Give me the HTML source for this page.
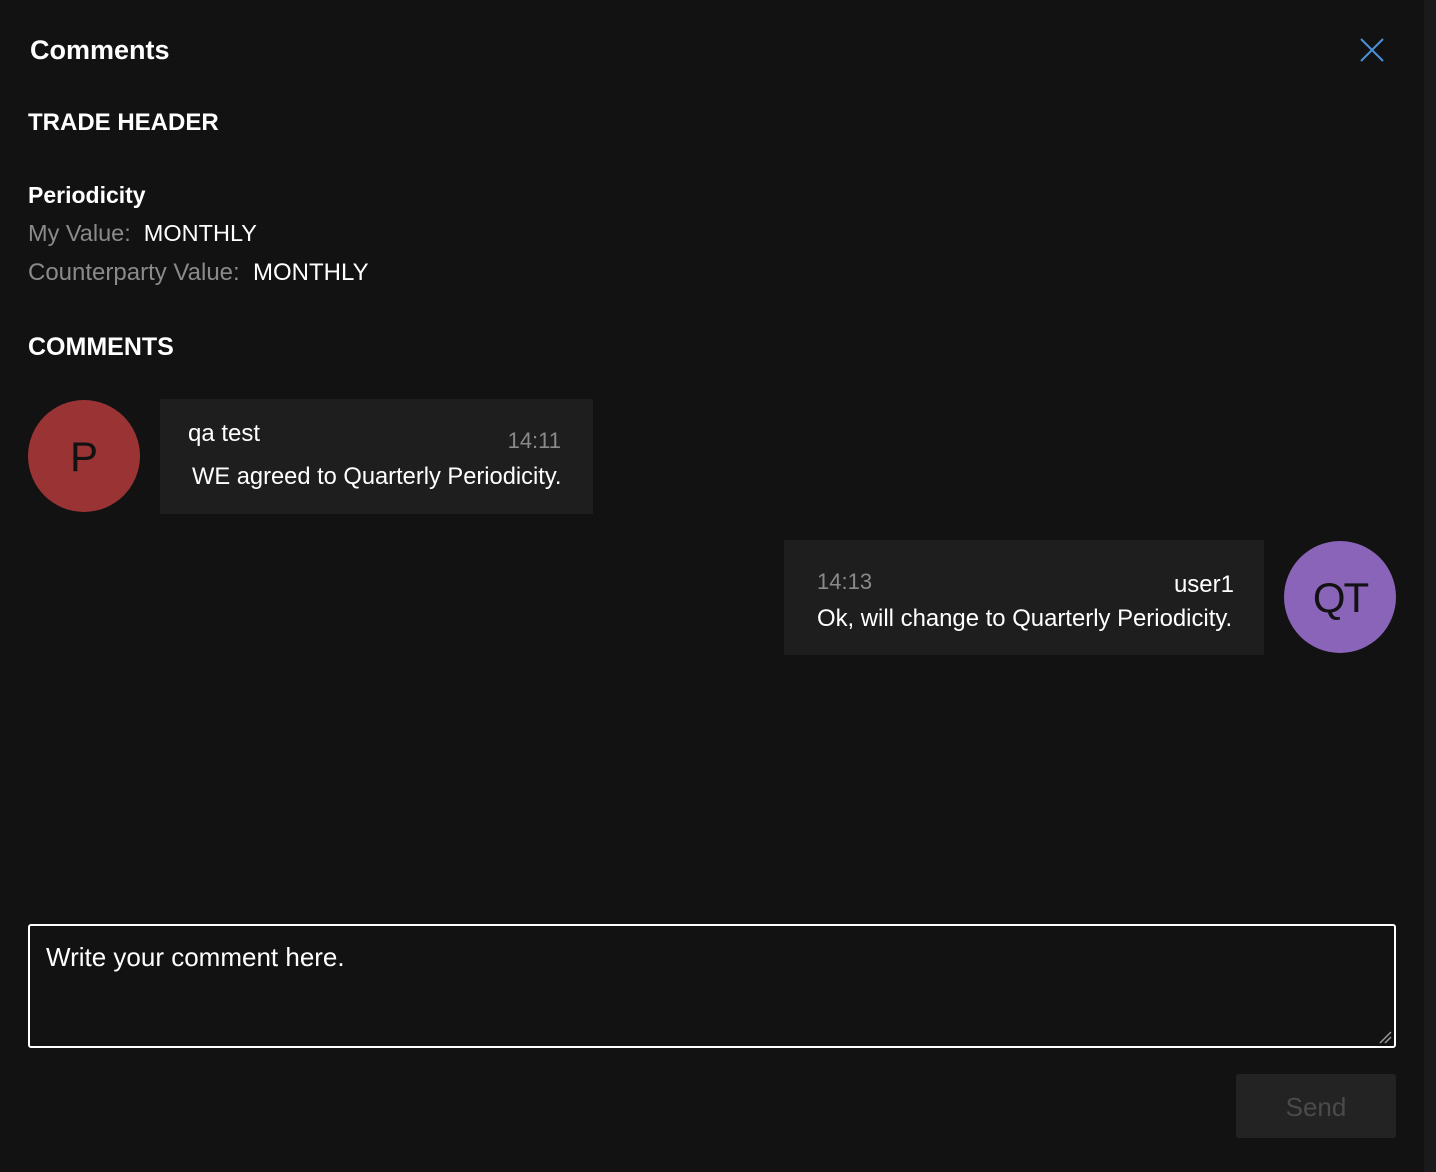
<!DOCTYPE html>
<html><head><meta charset="utf-8"><style>
*{margin:0;padding:0;box-sizing:border-box}
body{width:1436px;height:1172px;background:#121212;font-family:"Liberation Sans",sans-serif;color:#fff;position:relative;overflow:hidden}
.a{position:absolute;white-space:nowrap}
.b{font-weight:bold}
.g{color:#8a8a8a}
</style></head><body>
<div class="a" style="right:0;top:0;width:12px;height:1172px;background:#1a1a1a"></div>
<div class="a b" style="left:30px;top:35px;font-size:27px">Comments</div>
<svg class="a" style="left:1360px;top:38px" width="24" height="24"><path d="M1 1L23 23M23 1L1 23" stroke="#4a90d9" stroke-width="2"/></svg>
<div class="a b" style="left:28px;top:109px;font-size:24px">TRADE HEADER</div>
<div class="a b" style="left:28px;top:182px;font-size:23px">Periodicity</div>
<div class="a" style="left:28px;top:220px;font-size:23.5px"><span class="g">My Value:</span>&nbsp; MONTHLY</div>
<div class="a" style="left:28px;top:259px;font-size:24px"><span class="g">Counterparty Value:</span>&nbsp; MONTHLY</div>
<div class="a b" style="left:28px;top:333px;font-size:25px">COMMENTS</div>
<div class="a" style="left:28px;top:400px;width:112px;height:112px;border-radius:50%;background:#9a3434;color:#121212;font-size:42px;text-align:center;line-height:114px">P</div>
<div class="a" style="left:160px;top:399px;width:433px;height:115px;background:#1e1e1e">
<div class="a" style="left:28px;top:21px;font-size:24px">qa test</div>
<div class="a g" style="right:32px;top:29px;font-size:22px">14:11</div>
<div class="a" style="left:32px;top:65px;font-size:23.7px">WE agreed to Quarterly Periodicity.</div>
</div>
<div class="a" style="left:784px;top:540px;width:480px;height:115px;background:#1e1e1e">
<div class="a g" style="left:33px;top:29px;font-size:22px">14:13</div>
<div class="a" style="right:30px;top:31px;font-size:24px">user1</div>
<div class="a" style="left:33px;top:65px;font-size:23.9px">Ok, will change to Quarterly Periodicity.</div>
</div>
<div class="a" style="left:1284px;top:541px;width:112px;height:112px;border-radius:50%;background:#8a64b8;color:#121212;font-size:42px;text-align:center;line-height:114px;letter-spacing:-2px">QT</div>
<div class="a" style="left:28px;top:924px;width:1368px;height:124px;border:2px solid #fff;border-radius:3px">
<div class="a" style="left:16px;top:16px;font-size:26px">Write your comment here.</div>
<svg class="a" style="right:2px;bottom:2px" width="14" height="14"><path d="M2 13L13 2M7 13L13 7" stroke="#999" stroke-width="1.5"/></svg>
</div>
<div class="a" style="left:1236px;top:1074px;width:160px;height:64px;background:#232323;border-radius:3px;color:#4a4a4a;font-size:26px;text-align:center;line-height:66px">Send</div>
</body></html>
